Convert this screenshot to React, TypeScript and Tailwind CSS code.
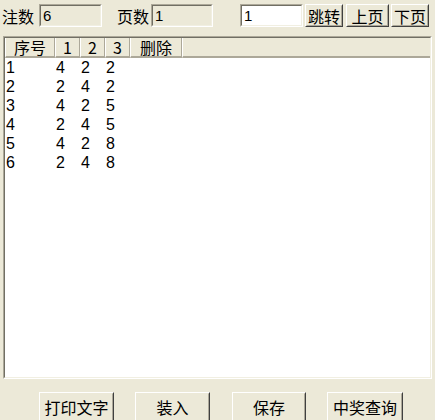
const font = { fontFamily: '"Noto Sans CJK SC", "Noto Sans", sans-serif' };
const digits = { fontFamily: '"Liberation Sans", Arial, sans-serif' };

const rows = [
  ["1", "4", "2", "2"],
  ["2", "2", "4", "2"],
  ["3", "4", "2", "5"],
  ["4", "2", "4", "5"],
  ["5", "4", "2", "8"],
  ["6", "2", "4", "8"],
];

function Btn({ label, w, className = "" }: { label: string; w: string; className?: string }) {
  return (
    <div
      className={`${w} ${className} border border-t-white border-l-white border-b-[#404040] border-r-[#404040] bg-[#ece9d8]`}
    >
      <div className="flex h-full items-center justify-center border border-transparent border-b-[#aca899] border-r-[#aca899] text-[16px] leading-[18px] text-black">
        {label}
      </div>
    </div>
  );
}

function Sunken({ children, className = "" }: { children: React.ReactNode; className?: string }) {
  return (
    <div className={`border border-t-[#aca899] border-l-[#aca899] border-b-white border-r-white ${className}`}>
      <div className="h-full border border-t-[#716f64] border-l-[#716f64] border-b-[#f1efe2] border-r-[#f1efe2]">
        {children}
      </div>
    </div>
  );
}

function HeadCell({ label, w }: { label: string; w: string }) {
  return (
    <div className={`${w} h-full border-l border-l-white border-r border-r-[#aca899] border-b-2 border-b-[#aca899] flex items-center justify-center text-[16px] leading-[17px]`}>
      {label}
    </div>
  );
}

export default function App() {
  return (
    <div className="h-[420px] w-[435px] overflow-hidden bg-[#ece9d8] text-black" style={font}>
      <div className="mt-[4px] flex h-[23px] items-center">
        <span className="ml-[2px] w-[37px] text-[16px] leading-[18px]">注数</span>
        <Sunken className="h-[23px] w-[63px]">
          <div className="flex h-full items-center pl-[2px] text-[15px] leading-[18px]" style={digits}>6</div>
        </Sunken>
        <span className="ml-[15px] w-[34px] text-[16px] leading-[18px]">页数</span>
        <Sunken className="h-[23px] w-[62px]">
          <div className="flex h-full items-center pl-[2px] text-[15px] leading-[18px]" style={digits}>1</div>
        </Sunken>
        <Sunken className="ml-[27px] h-[23px] w-[63px]">
          <div className="flex h-full items-center bg-white pl-[2px] text-[15px] leading-[18px]" style={digits}>1</div>
        </Sunken>
        <Btn label="跳转" w="w-[38px] h-[23px]" className="ml-[2px]" />
        <Btn label="上页" w="w-[43px] h-[23px]" className="ml-[3px]" />
        <Btn label="下页" w="w-[38px] h-[23px]" className="ml-[2px]" />
      </div>

      <Sunken className="ml-[3px] mt-[9px] h-[343px] w-[429px]">
        <div className="flex h-full flex-col bg-white">
          <div className="flex h-[20px] bg-[#ece9d8]">
            <HeadCell label="序号" w="w-[50px]" />
            <HeadCell label="1" w="w-[25px]" />
            <HeadCell label="2" w="w-[25px]" />
            <HeadCell label="3" w="w-[25px]" />
            <HeadCell label="删除" w="w-[52px]" />
            <div className="h-full flex-1 border-l border-l-white border-b-2 border-b-[#aca899]" />
          </div>
          <div style={digits}>
            {rows.map((r) => (
              <div key={r[0]} className="flex h-[19px] items-center text-[16px] leading-[19px]">
                <span className="w-[51px] pl-[1px]">{r[0]}</span>
                <span className="w-[25px]">{r[1]}</span>
                <span className="w-[25px]">{r[2]}</span>
                <span className="w-[25px]">{r[3]}</span>
              </div>
            ))}
          </div>
        </div>
      </Sunken>

      <div className="mt-[13px] flex">
        <Btn label="打印文字" w="w-[75px] h-[30px]" className="ml-[39px]" />
        <Btn label="装入" w="w-[75px] h-[30px]" className="ml-[21px]" />
        <Btn label="保存" w="w-[74px] h-[30px]" className="ml-[22px]" />
        <Btn label="中奖查询" w="w-[76px] h-[30px]" className="ml-[21px]" />
      </div>
    </div>
  );
}
